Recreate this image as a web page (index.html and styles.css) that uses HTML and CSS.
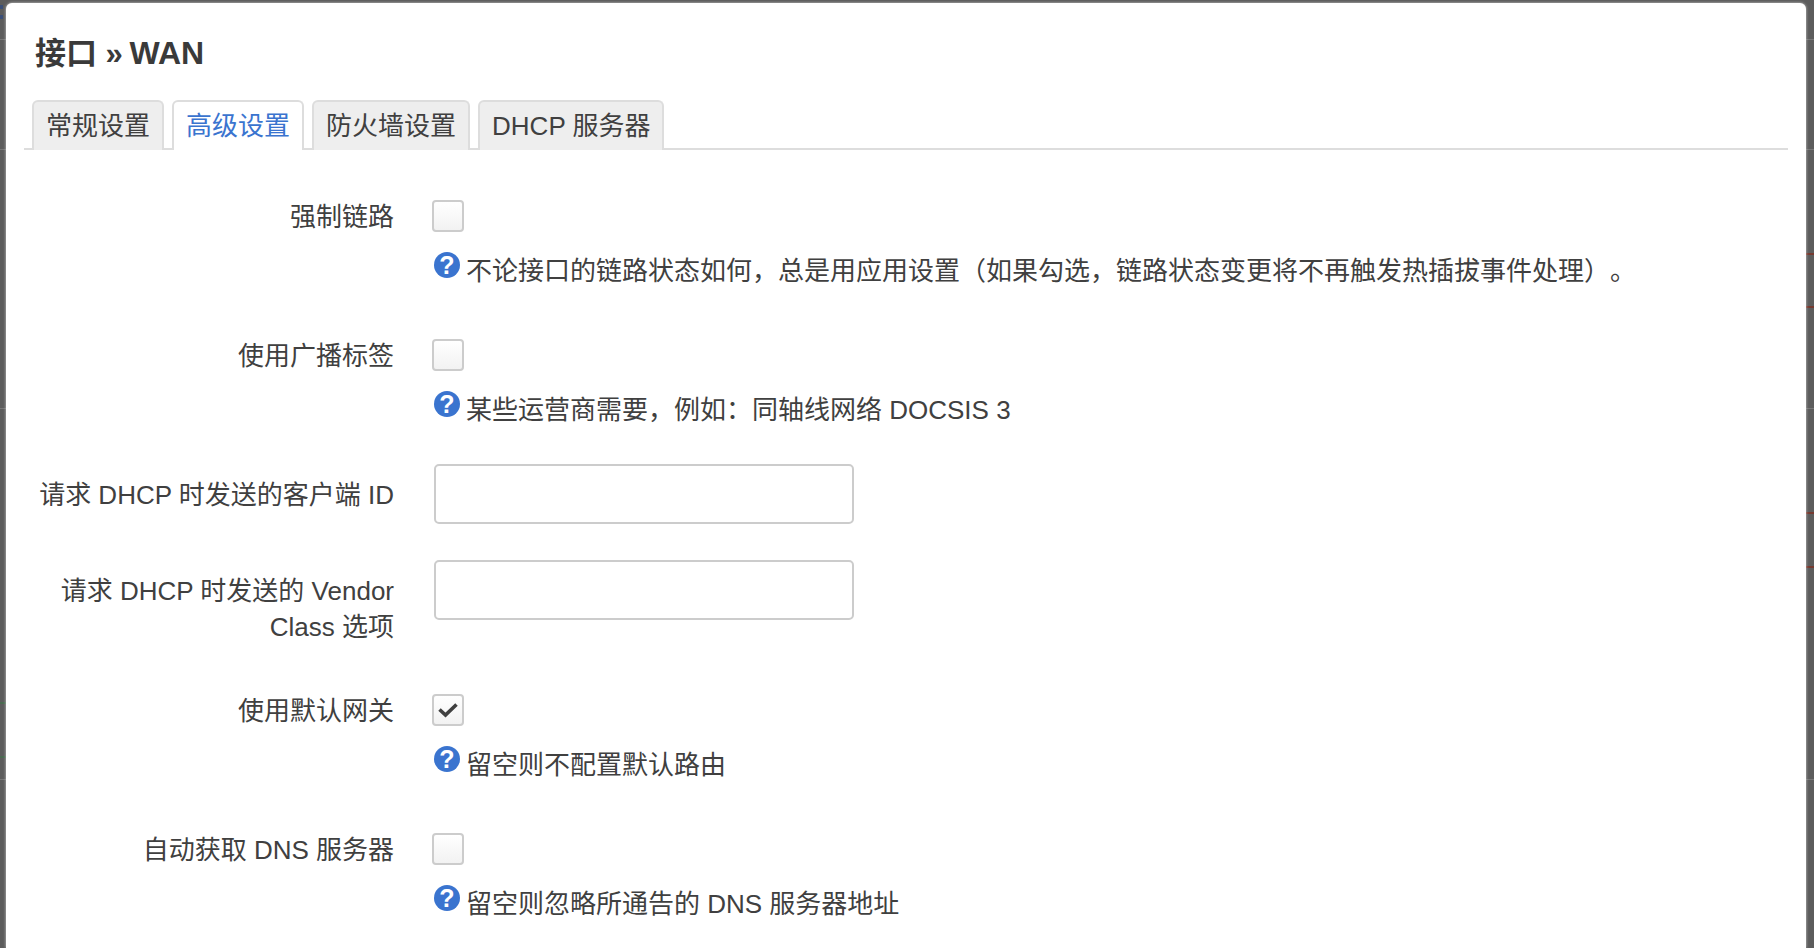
FILE: index.html
```html
<!DOCTYPE html>
<html lang="zh-CN">
<head>
<meta charset="utf-8">
<title>接口 » WAN</title>
<link rel="stylesheet" href="styles.css">
</head>
<body>
<main class="modal">
  <h2 class="title">接口 » <span class="title-wan">WAN</span></h2>
  <ul class="tabs">
    <li class="tab">常规设置</li>
    <li class="tab active">高级设置</li>
    <li class="tab">防火墙设置</li>
    <li class="tab">DHCP 服务器</li>
  </ul>
  <form class="form">
    <div class="row">
      <label class="label">强制链路</label>
      <div class="field">
        <span class="check"></span>
        <div class="help"><svg class="qicon" viewBox="0 0 26 26"><circle cx="13" cy="13" r="13"/><text x="13" y="22" text-anchor="middle">?</text></svg><span class="help-text">不论接口的链路状态如何，总是用应用设置（如果勾选，链路状态变更将不再触发热插拔事件处理）。</span></div>
      </div>
    </div>
    <div class="row">
      <label class="label">使用广播标签</label>
      <div class="field">
        <span class="check"></span>
        <div class="help"><svg class="qicon" viewBox="0 0 26 26"><circle cx="13" cy="13" r="13"/><text x="13" y="22" text-anchor="middle">?</text></svg><span class="help-text">某些运营商需要，例如：同轴线网络 DOCSIS 3</span></div>
      </div>
    </div>
    <div class="row">
      <label class="label">请求 DHCP 时发送的客户端 ID</label>
      <div class="field-input"><input class="input" type="text"></div>
    </div>
    <div class="row">
      <label class="label">请求 DHCP 时发送的 Vendor Class 选项</label>
      <div class="field-input"><input class="input" type="text"></div>
    </div>
    <div class="row">
      <label class="label">使用默认网关</label>
      <div class="field">
        <span class="check"><svg class="tick" viewBox="0 0 20 20"><path d="M1.5 9.5 L7.5 15 L18.5 4.5"/></svg></span>
        <div class="help"><svg class="qicon" viewBox="0 0 26 26"><circle cx="13" cy="13" r="13"/><text x="13" y="22" text-anchor="middle">?</text></svg><span class="help-text">留空则不配置默认路由</span></div>
      </div>
    </div>
    <div class="row">
      <label class="label">自动获取 DNS 服务器</label>
      <div class="field">
        <span class="check"></span>
        <div class="help"><svg class="qicon" viewBox="0 0 26 26"><circle cx="13" cy="13" r="13"/><text x="13" y="22" text-anchor="middle">?</text></svg><span class="help-text">留空则忽略所通告的 DNS 服务器地址</span></div>
      </div>
    </div>
  </form>
</main>
</body>
</html>
```
FILE: styles.css
```css
* { box-sizing: border-box; }
html, body { height: 100%; margin: 0; }
body {
  overflow: hidden;
  padding: 3px 8px 0 6px;
  font-family: "Liberation Sans", "Noto Sans CJK SC", sans-serif;
  text-spacing-trim: space-all;
  color: #404040;
  font-size: 26px;
  line-height: 36px;
  background-color: #5c5c5c;
  background-repeat: no-repeat;
  background-image:
    linear-gradient(#763a30, #763a30), linear-gradient(#763a30, #763a30),
    linear-gradient(#763a30, #763a30), linear-gradient(#763a30, #763a30),
    linear-gradient(#4a6a50, #4a6a50), linear-gradient(#4a6a50, #4a6a50),
    linear-gradient(#777, #777), linear-gradient(#777, #777),
    linear-gradient(#777, #777), linear-gradient(#777, #777),
    linear-gradient(#3a4f78, #3a4f78), linear-gradient(#3a4f78, #3a4f78);
  background-size:
    8px 2px, 8px 2px, 8px 2px, 8px 2px,
    6px 2px, 6px 2px,
    100% 1px, 100% 1px, 100% 1px, 100% 1px,
    3px 4px, 3px 4px;
  background-position:
    right 0 top 253px, right 0 top 306px, right 0 top 512px, right 0 top 566px,
    left 0 top 702px, left 0 top 756px,
    0 39px, 0 149px, 0 408px, 0 779px,
    left 0 top 5px, left 0 top 15px;
}
.modal {
  height: 100%;
  background: #fff;
  border-radius: 6px 6px 0 0;
  padding: 31px 18px 0 18px;
  box-shadow: 0 0 3px rgba(255,255,255,.7);
  overflow: hidden;
}
.title {
  margin: 0 0 0 11px;
  font-size: 31px;
  font-weight: 700;
  line-height: 38px;
  color: #3a3a3a;
}
.title-wan { margin-left: -2px; font-size: 32px; }
.tabs {
  display: flex;
  gap: 8px;
  list-style: none;
  margin: 27px 0 0;
  padding: 0 0 0 8px;
  height: 50px;
  border-bottom: 2px solid #ddd;
}
.tab {
  height: 50px;
  padding: 6px 12px 0;
  border: 2px solid #ddd;
  border-bottom: 0;
  border-radius: 6px 6px 0 0;
  background: #eee;
  white-space: nowrap;
}
.tab.active { background: #fff; color: #3a74cf; }
.form { padding-top: 36px; }
.row {
  display: grid;
  grid-template-columns: 370px 1fr;
  column-gap: 38px;
  margin-bottom: 36px;
}
.label {
  padding-top: 13px;
  margin-bottom: -1px;
  text-align: right;
}
.field { padding-top: 14px; }
.check {
  display: flex;
  align-items: center;
  justify-content: center;
  width: 32px;
  height: 32px;
  border: 2px solid #ccc;
  border-radius: 4px;
  background: linear-gradient(#fff, #f2f2f2);
}
.tick { flex: none; width: 20px; height: 20px; }
.tick path { fill: none; stroke: #404040; stroke-width: 3.6; }
.help {
  display: flex;
  margin-top: 20px;
  gap: 6px;
  padding-left: 2px;
}
.help-text { margin-top: 1px; }
.qicon { flex: none; width: 26px; height: 26px; }
.qicon circle { fill: #3a74cf; }
.qicon text { fill: #fff; font: 700 25px "Liberation Sans", sans-serif; }
.field-input { padding-left: 2px; }
.input {
  display: block;
  width: 420px;
  height: 60px;
  border: 2px solid #ccc;
  border-radius: 5px;
  background: #fff;
}
```
